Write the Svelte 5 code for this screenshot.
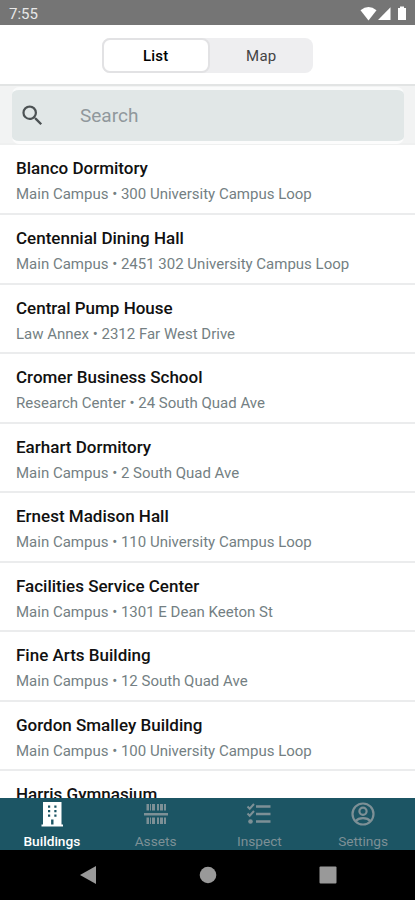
<script lang="ts">
	type Building = { name: string; site?: string; address?: string };

	const buildings: Building[] = [
		{ name: 'Blanco Dormitory', site: 'Main Campus', address: '300 University Campus Loop' },
		{ name: 'Centennial Dining Hall', site: 'Main Campus', address: '2451 302 University Campus Loop' },
		{ name: 'Central Pump House', site: 'Law Annex', address: '2312 Far West Drive' },
		{ name: 'Cromer Business School', site: 'Research Center', address: '24 South Quad Ave' },
		{ name: 'Earhart Dormitory', site: 'Main Campus', address: '2 South Quad Ave' },
		{ name: 'Ernest Madison Hall', site: 'Main Campus', address: '110 University Campus Loop' },
		{ name: 'Facilities Service Center', site: 'Main Campus', address: '1301 E Dean Keeton St' },
		{ name: 'Fine Arts Building', site: 'Main Campus', address: '12 South Quad Ave' },
		{ name: 'Gordon Smalley Building', site: 'Main Campus', address: '100 University Campus Loop' },
		{ name: 'Harris Gymnasium' }
	];

	const tabs = ['Buildings', 'Assets', 'Inspect', 'Settings'];

	let view = $state('List');
	let activeTab = $state('Buildings');
	let query = $state('');

	let visible = $derived(buildings.filter((b) => b.name.toLowerCase().includes(query.toLowerCase())));
</script>

<div class="screen">
	<div class="status-bar">
		<span>7:55</span>
		<svg width="48" height="16" viewBox="0 0 48 16" fill="#fff">
			<path d="M0.5 4.2 Q8.5 -2.4 16.5 4.2 L8.5 14.4 Z" />
			<path d="M18 14 L30.5 1.3 V14 Z" />
			<path d="M38 2 h2 V0.5 h4 V2 h2 V14 h-8 Z" />
		</svg>
	</div>

	<header>
		<div class="segmented">
			{#each ['List', 'Map'] as option}
				<button class:selected={view === option} onclick={() => (view = option)}>{option}</button>
			{/each}
		</div>
	</header>

	<div class="search-wrap">
		<label class="search">
			<svg width="27" height="27" viewBox="0 0 24 24" fill="#4c5254">
				<path d="M15.5 14h-.79l-.28-.27A6.471 6.471 0 0 0 16 9.5 6.5 6.5 0 1 0 9.5 16c1.61 0 3.09-.59 4.23-1.57l.27.28v.79l5 4.99L20.49 19l-4.99-5zm-6 0C7.01 14 5 11.99 5 9.5S7.01 5 9.5 5 14 7.01 14 9.5 11.99 14 9.5 14z" />
			</svg>
			<input placeholder="Search" bind:value={query} />
		</label>
	</div>

	<main>
		{#each visible as building}
			<div class="row">
				<div class="name">{building.name}</div>
				{#if building.site}
					<div class="detail">{building.site} • {building.address}</div>
				{/if}
			</div>
		{/each}
	</main>

	<nav class="tab-bar">
		{#each tabs as tab}
			<button class:active={activeTab === tab} onclick={() => (activeTab = tab)}>
				<svg width="26" height="26" viewBox="0 0 26 26">
					{#if tab === 'Buildings'}
						<path fill="currentColor" fill-rule="evenodd" d="M4 1h18.500v22.500H24V25.500H2.500v-2H4zM9 4.500v2.200h2.200v-2.200zM15.300 4.500v2.200h2.200v-2.200zM9 9v2.200h2.200V9zM15.300 9v2.200h2.200V9zM9 13.500v2.200h2.200v-2.200zM15.300 13.500v2.200h2.200v-2.200zM12.100 18.500v5h2.400v-5z" />
					{:else if tab === 'Assets'}
						<path fill="currentColor" d="M1 12h24v2.500H1zM3.500 3H6v6.500H3.500zM7 3h1v6.500H7zM9 3h3v6.500H9zM14 3h2v6.500h-2zM17 3h3v6.500h-3zM21 3h2v6.500h-2zM3.500 16.500H6V23H3.500zM7 16.500h1V23H7zM9 16.500h3V23H9zM14 16.500h2V23h-2zM17 16.500h3V23h-3zM21 16.500h2V23h-2z" />
					{:else if tab === 'Inspect'}
						<g fill="none" stroke="currentColor" stroke-width="2">
							<path d="M10 5.500h14.500M10 13h14.500M10 20.500h14.500" stroke-width="2.600" />
							<path d="M1.500 5.500l2.200 2.200L8 3M1.500 12.500l2.200 2.200L8 10" />
						</g>
						<circle cx="4.500" cy="20.500" r="2.300" fill="currentColor" />
					{:else}
						<g fill="none" stroke="currentColor" stroke-width="2.200">
							<circle cx="13" cy="13" r="10.500" />
							<circle cx="13" cy="10.200" r="3.600" />
							<path d="M5.500 20.200c1.700-2 4.500-3 7.500-3s5.800 1 7.500 3" />
						</g>
					{/if}
				</svg>
				<span>{tab}</span>
			</button>
		{/each}
	</nav>

	<div class="system-nav">
		<svg width="18" height="20" viewBox="0 0 18 20"><path d="M1 10 L17 1 V19 Z" /></svg>
		<svg width="18" height="18" viewBox="0 0 18 18"><circle cx="9" cy="9" r="8.3" /></svg>
		<svg width="18" height="18" viewBox="0 0 18 18"><rect x="0.5" y="0.5" width="17" height="17" rx="1" /></svg>
	</div>
</div>

<style>
	.screen {
		width: 415px;
		height: 900px;
		display: flex;
		flex-direction: column;
		overflow: hidden;
		background: #fff;
		font-family: Roboto, 'Liberation Sans', sans-serif;
	}

	button {
		border: none;
		background: none;
		padding: 0;
		font-family: inherit;
		cursor: pointer;
	}

	.status-bar {
		height: 25px;
		flex-shrink: 0;
		display: flex;
		align-items: center;
		justify-content: space-between;
		padding: 2px 7px 0 9px;
		box-sizing: border-box;
		background: #757575;
		color: #e8e8e8;
		font-size: 15px;
	}

	header {
		height: 59px;
		flex-shrink: 0;
		display: flex;
		align-items: center;
		justify-content: center;
		padding-top: 2px;
		box-sizing: border-box;
	}

	.segmented {
		display: flex;
		width: 211px;
		height: 35px;
		border-radius: 8px;
		background: #eeeef0;
	}

	.segmented button {
		flex: 1;
		border-radius: 8px;
		font-size: 15px;
		letter-spacing: 0.2px;
		color: #444;
	}

	.segmented .selected {
		box-sizing: border-box;
		border: 2px solid #e2e2e4;
		background: #fff;
		color: #000;
		font-weight: 500;
	}

	.search-wrap {
		height: 61px;
		flex-shrink: 0;
		box-sizing: border-box;
		border-top: 2px solid #e2e4e4;
		border-bottom: 2px solid #eff0f0;
		background: #f2f3f3;
		padding: 1px 11px 0 12px;
	}

	.search {
		display: flex;
		align-items: center;
		height: 51px;
		border-radius: 7px;
		background: #e1e7e7;
		border-top: 3px solid #fafbfb;
		border-bottom: 3px solid #fcfcfc;
		padding-left: 7px;
	}

	.search input {
		flex: 1;
		min-width: 0;
		margin-left: 34px;
		padding: 0;
		border: none;
		outline: none;
		background: none;
		font-family: inherit;
		font-size: 19px;
	}

	.search input::placeholder {
		color: #90989c;
	}

	main {
		flex: 1;
		min-height: 0;
		overflow: hidden;
	}

	.row {
		height: 69.5px;
		box-sizing: border-box;
		padding: 12px 16px 0;
		border-bottom: 2px solid #ebeced;
	}

	.row:first-child {
		height: 70px;
	}

	.name {
		font-size: 17px;
		line-height: 22px;
		font-weight: 500;
		color: #111;
	}

	.detail {
		margin-top: 5px;
		font-size: 15px;
		line-height: 20px;
		color: #747f83;
	}

	.tab-bar {
		height: 52px;
		flex-shrink: 0;
		display: flex;
		background: #1c5564;
	}

	.tab-bar button {
		flex: 1;
		display: flex;
		flex-direction: column;
		align-items: center;
		padding-top: 3px;
		font-size: 13.7px;
		line-height: 18px;
		color: #7d9096;
	}

	.tab-bar svg {
		flex-shrink: 0;
		margin-bottom: 5px;
	}

	.tab-bar .active {
		color: #fff;
		font-weight: 500;
	}

	.system-nav {
		height: 50px;
		flex-shrink: 0;
		display: flex;
		align-items: center;
		justify-content: center;
		gap: 102px;
		background: #000;
		fill: #999;
	}
</style>
